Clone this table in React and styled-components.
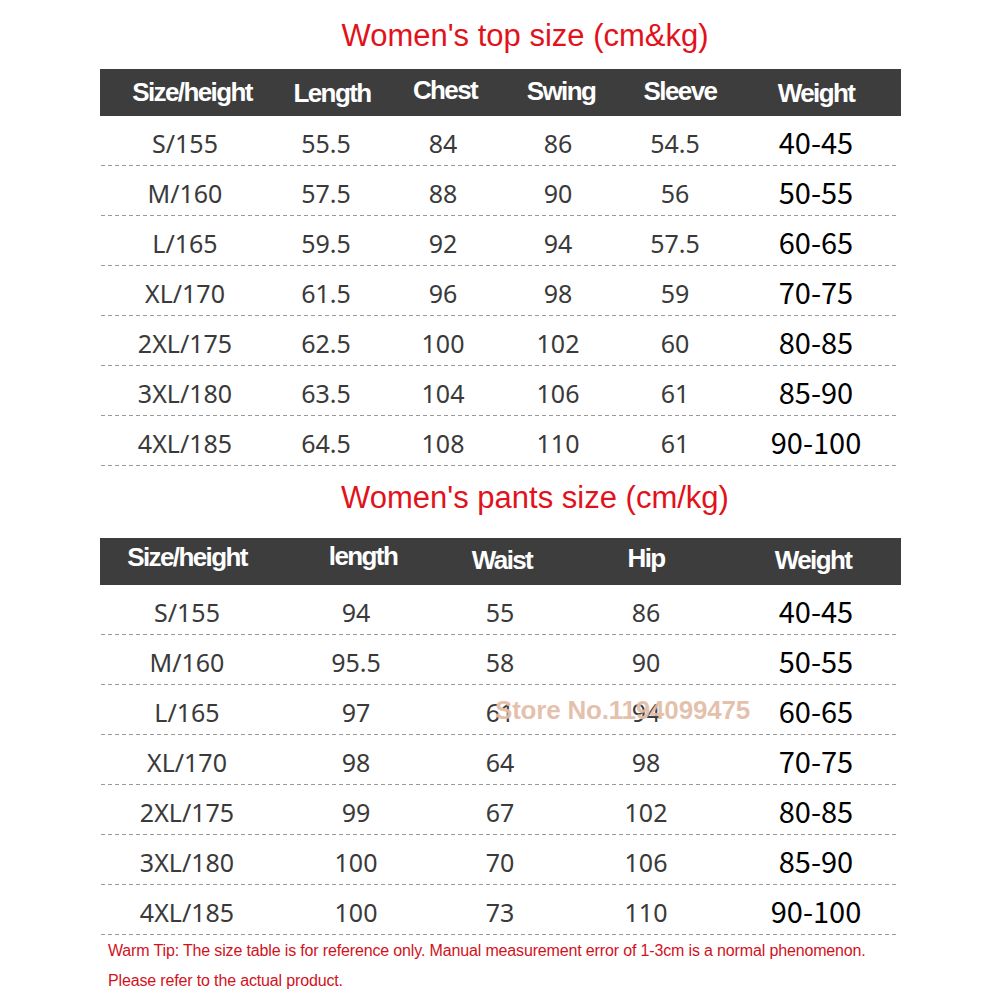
import React from "react";
import styled, { createGlobalStyle } from "styled-components";

const Global = createGlobalStyle`
  html, body { margin: 0; padding: 0; background: #fff; }
  body { font-family: "Liberation Sans", Arial, sans-serif; }
`;

const Page = styled.div`
  width: 1000px;
  height: 1000px;
  overflow: hidden;
  background: #fff;
  display: flex;
  flex-direction: column;
`;

const Title = styled.h1`
  margin: 0;
  height: ${(p) => p.$h}px;
  display: flex;
  align-items: center;
  justify-content: center;
  padding-left: ${(p) => p.$shift}px;
  padding-top: ${(p) => p.$pt || 0}px;
  padding-bottom: ${(p) => p.$pb || 0}px;
  box-sizing: border-box;
  font-family: "Liberation Sans", Arial, sans-serif;
  font-weight: 400;
  font-size: 31px;
  color: #e1121b;
`;

const Table = styled.div`
  margin-left: 100px;
  width: 801px;
  display: flex;
  flex-direction: column;
`;

const HeadRow = styled.div`
  height: 47px;
  background: #3d3d3d;
  display: grid;
  grid-template-columns: ${(p) => p.$cols};
  align-items: center;
`;

const HeadCell = styled.div`
  text-align: center;
  color: #fff;
  font-family: "Liberation Sans", Arial, sans-serif;
  font-weight: 700;
  font-size: 26px;
  letter-spacing: -1.6px;
  white-space: nowrap;
  transform: translateY(${(p) => p.$dy || 0}px);
`;

const Row = styled.div`
  position: relative;
  height: 50px;
  box-sizing: border-box;
  display: grid;
  grid-template-columns: ${(p) => p.$cols};
  align-items: center;
  padding-top: 3px;
  &::after {
    content: "";
    position: absolute;
    left: 1px;
    right: 4px;
    bottom: 0;
    height: 1px;
    background: repeating-linear-gradient(
      to right,
      #9a9a9a 0 4px,
      transparent 4px 7px
    );
  }
`;

const Cell = styled.div`
  text-align: center;
  white-space: nowrap;
  font-family: "Noto Sans", "Open Sans", sans-serif;
  font-weight: 400;
  font-size: 25px;
  color: #3a3a3a;
`;

const WeightCell = styled.div`
  text-align: center;
  white-space: nowrap;
  font-family: "Noto Sans CJK SC", "Liberation Sans", sans-serif;
  font-size: 29px;
  line-height: 1;
  color: #000;
  transform: translateY(-1px);
`;

const Watermark = styled.div`
  position: absolute;
  left: 395px;
  top: 50%;
  transform: translateY(-48%);
  font-family: "Liberation Sans", Arial, sans-serif;
  font-weight: 700;
  font-size: 26px;
  letter-spacing: -0.2px;
  color: rgba(205, 140, 100, 0.55);
  text-shadow: 0 0 1px rgba(255, 255, 255, 0.9);
  white-space: nowrap;
  pointer-events: none;
`;

const Tips = styled.div`
  padding: 6px 0 0 108px;
  display: flex;
  flex-direction: column;
  gap: 10px;
`;

const Tip = styled.p`
  margin: 0;
  font-family: "Liberation Sans", Arial, sans-serif;
  font-size: 16px;
  line-height: 20px;
  color: #d1121c;
  letter-spacing: -0.15px;
`;

const topHeadCols = "184px 96px 130px 102px 136px 136px 1fr";
const topBodyCols = "170px 112px 122px 108px 126px 156px 1fr";
const pantsHeadCols = "174px 178px 100px 188px 146px 1fr";
const pantsBodyCols = "174px 164px 124px 168px 172px 1fr";

const topHeads = ["Size/height", "Length", "Chest", "Swing", "Sleeve", "Weight"];
const topDy = [0, 1, -2, -1, -1, 1];
const topRows = [
  ["S/155", "55.5", "84", "86", "54.5", "40-45"],
  ["M/160", "57.5", "88", "90", "56", "50-55"],
  ["L/165", "59.5", "92", "94", "57.5", "60-65"],
  ["XL/170", "61.5", "96", "98", "59", "70-75"],
  ["2XL/175", "62.5", "100", "102", "60", "80-85"],
  ["3XL/180", "63.5", "104", "106", "61", "85-90"],
  ["4XL/185", "64.5", "108", "110", "61", "90-100"],
];

const pantsHeads = ["Size/height", "length", "Waist", "Hip", "Weight"];
const pantsDy = [-4, -5, -1, -3, -1];
const pantsRows = [
  ["S/155", "94", "55", "86", "40-45"],
  ["M/160", "95.5", "58", "90", "50-55"],
  ["L/165", "97", "61", "94", "60-65"],
  ["XL/170", "98", "64", "98", "70-75"],
  ["2XL/175", "99", "67", "102", "80-85"],
  ["3XL/180", "100", "70", "106", "85-90"],
  ["4XL/185", "100", "73", "110", "90-100"],
];

function SizeTable({ heads, dy, rows, headCols, bodyCols, watermarkRow }) {
  return (
    <Table>
      <HeadRow $cols={headCols}>
        {heads.map((h, i) => (
          <HeadCell key={h} $dy={dy[i]}>
            {h}
          </HeadCell>
        ))}
      </HeadRow>
      {rows.map((r, ri) => (
        <Row key={r[0]} $cols={bodyCols}>
          {r.map((v, i) =>
            i === r.length - 1 ? (
              <WeightCell key={i}>{v}</WeightCell>
            ) : (
              <Cell key={i}>{v}</Cell>
            )
          )}
          {watermarkRow === ri && <Watermark>Store No.1194099475</Watermark>}
        </Row>
      ))}
    </Table>
  );
}

export default function App() {
  return (
    <Page>
      <Global />
      <Title $h={69} $shift={50} $pt={2}>
        Women's top size (cm&amp;kg)
      </Title>
      <SizeTable
        heads={topHeads}
        dy={topDy}
        rows={topRows}
        headCols={topHeadCols}
        bodyCols={topBodyCols}
      />
      <Title $h={72} $shift={70} $pb={8}>
        Women's pants size (cm/kg)
      </Title>
      <SizeTable
        heads={pantsHeads}
        dy={pantsDy}
        rows={pantsRows}
        headCols={pantsHeadCols}
        bodyCols={pantsBodyCols}
        watermarkRow={2}
      />
      <Tips>
        <Tip>
          Warm Tip: The size table is for reference only. Manual measurement
          error of 1-3cm is a normal phenomenon.
        </Tip>
        <Tip>Please refer to the actual product.</Tip>
      </Tips>
    </Page>
  );
}
